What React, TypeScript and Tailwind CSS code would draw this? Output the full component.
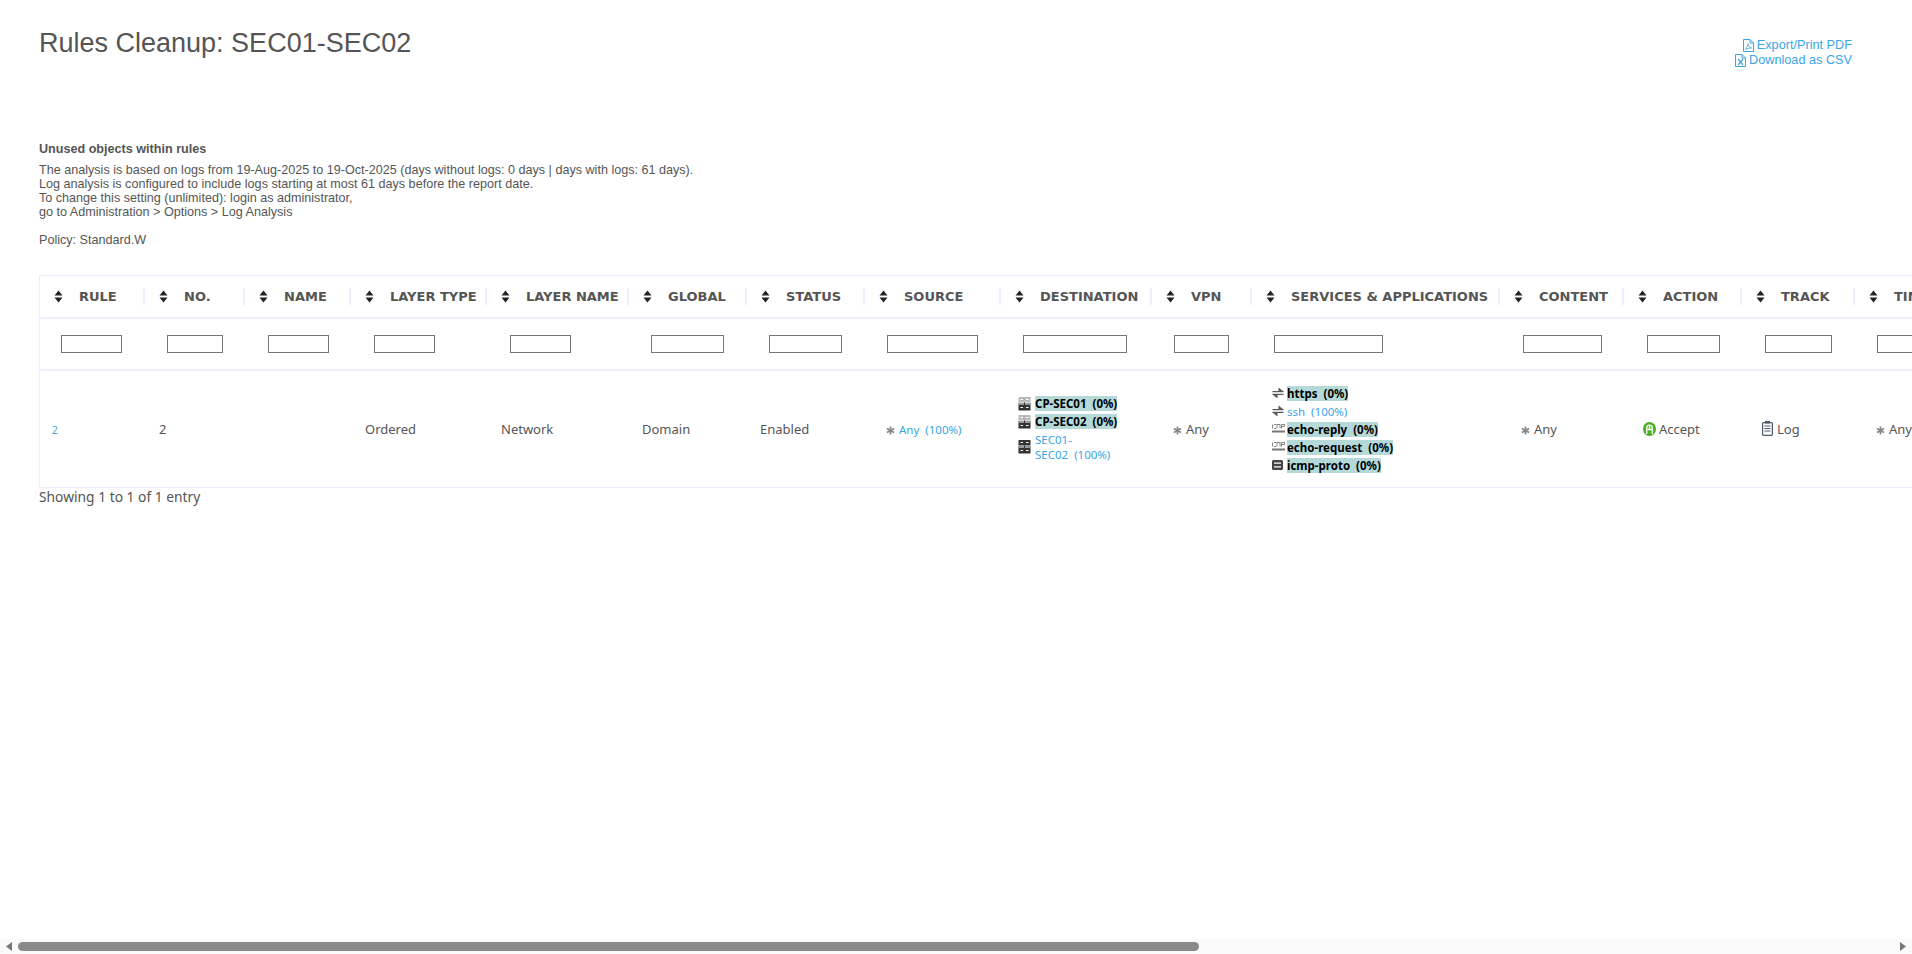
import type { ReactNode } from "react";

const tableFont = "font-['Noto_Sans','DejaVu_Sans',sans-serif]";

// header + filter input for each column, widths read off the screenshot
const columns = [
  { label: "RULE", col: "w-[105px]", input: "w-[61px] ml-[21px]" },
  { label: "NO.", col: "w-[100px]", input: "w-[56px] ml-[22px]" },
  { label: "NAME", col: "w-[106px]", input: "w-[61px] ml-[23px]" },
  { label: "LAYER TYPE", col: "w-[136px]", input: "w-[61px] ml-[23px]" },
  { label: "LAYER NAME", col: "w-[142px]", input: "w-[61px] ml-[23px]" },
  { label: "GLOBAL", col: "w-[118px]", input: "w-[73px] ml-[22px]" },
  { label: "STATUS", col: "w-[118px]", input: "w-[73px] ml-[22px]" },
  { label: "SOURCE", col: "w-[136px]", input: "w-[91px] ml-[22px]" },
  { label: "DESTINATION", col: "w-[151px]", input: "w-[104px] ml-[22px]" },
  { label: "VPN", col: "w-[100px]", input: "w-[55px] ml-[22px]" },
  { label: "SERVICES & APPLICATIONS", col: "w-[248px]", input: "w-[109px] ml-[22px]" },
  { label: "CONTENT", col: "w-[124px]", input: "w-[79px] ml-[23px]" },
  { label: "ACTION", col: "w-[118px]", input: "w-[73px] ml-[23px]" },
  { label: "TRACK", col: "w-[113px]", input: "w-[67px] ml-[23px]" },
  { label: "TIME", col: "w-[150px]", input: "w-[73px] ml-[22px]" },
];

const SortIcon = () => (
  <svg width="9" height="13" viewBox="0 0 9 13" className="shrink-0">
    <path d="M4.5 0.5 8.5 5.5H0.5Z M4.5 12.5 0.5 7.5H8.5Z" fill="#222" />
  </svg>
);

const AnyIcon = () => (
  <svg width="9" height="9" viewBox="0 0 10 10" className="shrink-0">
    <path d="M5 0.5V9.5M1 2.8 9 7.2M9 2.8 1 7.2" stroke="#888" strokeWidth="2" />
  </svg>
);

const ServerIcon = ({ top, bottom }: { top: string; bottom: string }) => (
  <svg width="13" height="14" viewBox="0 0 13 14" className="shrink-0">
    <rect x="0.5" y="0" width="12" height="5.5" fill={top} />
    <rect x="0.5" y="8" width="12" height="5.5" fill={bottom} />
    <rect x="6" y="5.5" width="1" height="2.5" fill={bottom} />
    <rect x="0" y="6.5" width="13" height="1" fill={bottom} />
    <path d="M2.5 2.5H5M8 2.5H10.5M2.5 10.5H5M8 10.5H10.5" stroke="#fff" strokeWidth="1" />
  </svg>
);

const ServiceIcon = () => (
  <svg width="12" height="12" viewBox="0 0 12 12" className="shrink-0">
    <path d="M6.5 0.5 11.5 4.5H6.5Z M5.5 11.5 0.5 7.5H5.5Z" fill="#555" />
    <rect x="0.5" y="4" width="11" height="1.2" fill="#555" />
    <rect x="0.5" y="6.8" width="11" height="1.2" fill="#555" />
  </svg>
);

const IcmpIcon = () => (
  <svg width="13" height="10" viewBox="0 0 13 10" className="shrink-0">
    <path d="M0.5 0.5V4.5M2 0.5H4V1M2 4.5H4M5 4.5V0.5H8V4.5M9.5 4.5V0.5H12.5V2.5H9.5" stroke="#777" strokeWidth="0.9" fill="none" />
    <rect x="0" y="6.5" width="13" height="2" fill="#777" />
  </svg>
);

const ProtoIcon = () => (
  <svg width="11" height="10" viewBox="0 0 11 10" className="shrink-0">
    <rect width="11" height="10" rx="1.5" fill="#444" />
    <path d="M2 3.2H9M2 6.8H9" stroke="#fff" strokeWidth="1.3" />
  </svg>
);

const AcceptIcon = () => (
  <svg width="13" height="14" viewBox="0 0 13 14" className="mb-[3px] shrink-0">
    <ellipse cx="6.5" cy="7" rx="6.5" ry="7" fill="#4caf28" />
    <path d="M3.7 12V6C3.7 2.2 9.3 2.2 9.3 6V12M3.7 7.5H9.3M6.5 3V7.5" stroke="#fff" strokeWidth="1.3" fill="none" />
  </svg>
);

const LogIcon = () => (
  <svg width="11" height="15" viewBox="0 0 11 15" className="mb-[4px] shrink-0">
    <rect x="0.6" y="1.6" width="9.8" height="12.8" rx="1" fill="none" stroke="#4a5a6a" strokeWidth="1.2" />
    <rect x="3" y="0" width="5" height="2.5" fill="#4a5a6a" />
    <path d="M2.5 5H8.5M2.5 7.5H8.5M2.5 10H8.5" stroke="#4a5a6a" strokeWidth="1.2" />
  </svg>
);

const FileIcon = ({ children }: { children: ReactNode }) => (
  <svg width="11" height="13" viewBox="0 0 11 13" className="shrink-0">
    <path d="M0.5 0.5H7L10.5 4V12.5H0.5Z M7 0.5V4H10.5" fill="none" stroke="#39a5e5" strokeWidth="1" />
    {children}
  </svg>
);

const Highlight = ({ children }: { children: ReactNode }) => (
  <span className="block bg-[#b5d9d9] font-bold text-black leading-[15px] whitespace-nowrap">{children}</span>
);

const Row = ({ icon, children }: { icon: ReactNode; children: ReactNode }) => (
  <div className="flex items-center">
    {icon}
    {children}
  </div>
);

const AnyCell = () => (
  <div className="flex items-center gap-[4px] pl-[21px]">
    <AnyIcon />
    <span>Any</span>
  </div>
);

const plainCell = "align-middle border-b border-[#eeeeff]";
const textCell = "align-middle border-b border-[#eeeeff] pt-[2px]";

export default function App() {
  return (
    <div className="flex h-screen flex-col overflow-hidden bg-white text-[#555] font-['Liberation_Sans',Arial,sans-serif]">
      <main className="min-h-0 flex-1 overflow-hidden">
        <div className="flex justify-between pl-[39px] pr-[60px] pt-[26px]">
          <h1 className="text-[27px] leading-[34px] font-normal">Rules Cleanup: SEC01-SEC02</h1>
          <div className="flex flex-col items-end pt-[12px] text-[12.7px] leading-[15px] text-[#39a5e5]">
            <div className="flex items-center gap-[3px]">
              <FileIcon>
                <path d="M2.5 10.5C4 8 5 5.5 5 4.5C5 6.5 6.5 8.5 8.5 9C6.5 9 4.5 9.5 2.5 10.5Z" fill="none" stroke="#39a5e5" strokeWidth="0.8" />
              </FileIcon>
              <span>Export/Print PDF</span>
            </div>
            <div className="flex items-center gap-[3px]">
              <FileIcon>
                <path d="M3 5L8 11M8 5L3 11" stroke="#39a5e5" strokeWidth="1.2" />
              </FileIcon>
              <span>Download as CSV</span>
            </div>
          </div>
        </div>

        <div className="mt-[74px] pl-[39px] text-[12.6px] leading-[14px]">
          <div className="font-bold">Unused objects within rules</div>
          <p className="mt-[7px]">
            The analysis is based on logs from 19-Aug-2025 to 19-Oct-2025 (days without logs: 0 days | days with logs: 61 days).
            <br />
            Log analysis is configured to include logs starting at most 61 days before the report date.
            <br />
            To change this setting (unlimited): login as administrator,
            <br />
            go to Administration &gt; Options &gt; Log Analysis
            <br />
            <br />
            Policy: Standard.W
          </p>
        </div>

        <div className={`mt-[28px] ml-[39px] ${tableFont} text-[13px]`}>
          <table className="w-[1965px] table-fixed border-separate border-spacing-0 border-l border-[#eeeeff]">
            <thead>
              <tr>
                {columns.map((c) => (
                  <th key={c.label} className={`${c.col} h-[44px] border-t border-b-2 border-[#eeeeff] p-0 align-middle font-bold`}>
                    <div className="flex h-[17px] items-center gap-[16px] border-r-2 border-[#eeeeff] pl-[14px] text-left font-['DejaVu_Sans',sans-serif] whitespace-nowrap text-[#555]">
                      <SortIcon />
                      <span>{c.label}</span>
                    </div>
                  </th>
                ))}
              </tr>
              <tr>
                {columns.map((c) => (
                  <td key={c.label} className="h-[52px] border-b-2 border-[#eeeeff] p-0 align-middle">
                    <input type="text" className={`${c.input} block h-[18px] border border-[#767676] bg-white`} />
                  </td>
                ))}
              </tr>
            </thead>
            <tbody>
              <tr>
                <td className={`${textCell} h-[117px] pl-[12px] text-[10px] text-[#39a5e5]`}>2</td>
                <td className={`${textCell} pl-[14px]`}>2</td>
                <td className={plainCell}></td>
                <td className={`${textCell} pl-[14px]`}>Ordered</td>
                <td className={`${textCell} pl-[14px]`}>Network</td>
                <td className={`${textCell} pl-[13px]`}>Domain</td>
                <td className={`${textCell} pl-[13px]`}>Enabled</td>
                <td className={textCell}>
                  <div className="flex items-center gap-[4px] pl-[21px] text-[11.5px] text-[#39a5e5]">
                    <AnyIcon />
                    <span>Any{"\u00a0\u00a0"}(100%)</span>
                  </div>
                </td>
                <td className={`${plainCell} pl-[17px] text-[11.5px]`}>
                  <div className="flex flex-col gap-[3px]">
                    <Row icon={<ServerIcon top="#b9b9b9" bottom="#333" />}>
                      <span className="ml-[4px]"><Highlight>CP-SEC01{"\u00a0\u00a0"}(0%)</Highlight></span>
                    </Row>
                    <Row icon={<ServerIcon top="#b9b9b9" bottom="#333" />}>
                      <span className="ml-[4px]"><Highlight>CP-SEC02{"\u00a0\u00a0"}(0%)</Highlight></span>
                    </Row>
                    <Row icon={<ServerIcon top="#333" bottom="#333" />}>
                      <span className="ml-[4px] leading-[15px] text-[#39a5e5]">
                        SEC01-
                        <br />
                        SEC02{"\u00a0\u00a0"}(100%)
                      </span>
                    </Row>
                  </div>
                </td>
                <td className={textCell}><AnyCell /></td>
                <td className={`${plainCell} pl-[20px] text-[11.5px]`}>
                  <div className="flex flex-col gap-[3px]">
                    <Row icon={<ServiceIcon />}><span className="ml-[3px]"><Highlight>https{"\u00a0\u00a0"}(0%)</Highlight></span></Row>
                    <Row icon={<ServiceIcon />}><span className="ml-[3px] leading-[15px] text-[#39a5e5]">ssh{"\u00a0\u00a0"}(100%)</span></Row>
                    <Row icon={<IcmpIcon />}><span className="ml-[2px]"><Highlight>echo-reply{"\u00a0\u00a0"}(0%)</Highlight></span></Row>
                    <Row icon={<IcmpIcon />}><span className="ml-[2px]"><Highlight>echo-request{"\u00a0\u00a0"}(0%)</Highlight></span></Row>
                    <Row icon={<ProtoIcon />}><span className="ml-[4px]"><Highlight>icmp-proto{"\u00a0\u00a0"}(0%)</Highlight></span></Row>
                  </div>
                </td>
                <td className={textCell}><AnyCell /></td>
                <td className={`${textCell} pl-[19px]`}>
                  <div className="flex items-center gap-[3px]">
                    <AcceptIcon />
                    <span>Accept</span>
                  </div>
                </td>
                <td className={`${textCell} pl-[20px]`}>
                  <div className="flex items-center gap-[4px]">
                    <LogIcon />
                    <span>Log</span>
                  </div>
                </td>
                <td className={textCell}><AnyCell /></td>
              </tr>
            </tbody>
          </table>
          <div className="text-[13.8px] leading-[18px]">Showing 1 to 1 of 1 entry</div>
        </div>
      </main>

      {/* horizontal scrollbar as it looks in the screenshot */}
      <div className="flex h-[15px] shrink-0 items-center bg-[#fafafa] px-[5px]">
        <svg width="8" height="9" viewBox="0 0 8 9" className="shrink-0">
          <path d="M7 0V9L1 4.5Z" fill="#777" />
        </svg>
        <div className="ml-[5px] h-[9px] w-[1181px] rounded-[5px] bg-[#8a8a8a]" />
        <svg width="8" height="9" viewBox="0 0 8 9" className="ml-auto shrink-0">
          <path d="M1 0V9L7 4.5Z" fill="#777" />
        </svg>
      </div>
    </div>
  );
}
